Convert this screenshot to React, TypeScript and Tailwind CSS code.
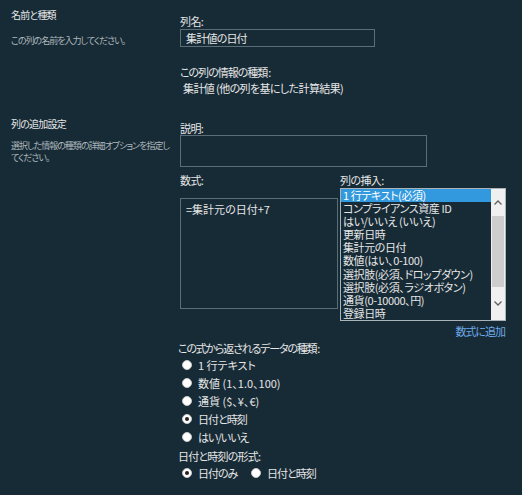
const font = "font-['Noto_Sans_CJK_JP','Noto_Sans',sans-serif] [font-feature-settings:'palt']";

const insertItems = [
  '1 行テキスト(必須)',
  'コンプライアンス資産 ID',
  'はい/いいえ (いいえ)',
  '更新日時',
  '集計元の日付',
  '数値(はい、0-100)',
  '選択肢(必須、ドロップダウン)',
  '選択肢(必須、ラジオボタン)',
  '通貨(0-10000、円)',
  '登録日時',
];

// labels made of kana/kanji only are drawn narrower, like the original UI font
const returnTypes = [
  { label: '1 行テキスト', checked: false, tight: false },
  { label: '数値 (1、1.0、100)', checked: false, tight: false },
  { label: '通貨 ($、¥、€)', checked: false, tight: false },
  { label: '日付と時刻', checked: true, tight: true },
  { label: 'はい/いいえ', checked: false, tight: true },
];

function Radio({ checked }: { checked: boolean }) {
  return (
    <span className="w-[10px] h-[10px] rounded-full bg-white border border-[#c8c8c8] flex items-center justify-center shrink-0">
      {checked && <span className="w-[4px] h-[4px] rounded-full bg-[#222]" />}
    </span>
  );
}

export default function App() {
  return (
    <div className={`w-[522px] h-[495px] bg-[#172b36] text-[#e6e6e6] text-[11px] leading-[14px] ${font}`}>
      {/* Name and type */}
      <div className="flex">
        <div className="w-[180px] pl-[11px] pt-[8px]">
          <div className="text-[10px] tracking-[-0.8px]">名前と種類</div>
          <div className="mt-[12px] text-[9px] leading-[13px] tracking-[-1px] text-[#aeb7bc]">この列の名前を入力してください。</div>
        </div>
        <div className="pt-[14px]">
          <div className="tracking-[-0.6px]">列名:</div>
          <div className="mt-[1px] w-[195px] h-[18px] border border-[#5b6d77] pl-[5px] leading-[16px] tracking-[-0.8px]">集計値の日付</div>
          <div className="mt-[18px] tracking-[-1px]">この列の情報の種類<span className="ml-[1px]">:</span></div>
          <div className="mt-[2px] pl-[3px] tracking-[-0.6px]">集計値 (他の列を基にした計算結果)</div>
        </div>
      </div>

      {/* Additional settings */}
      <div className="flex mt-[22px]">
        <div className="w-[180px] pl-[11px]">
          <div className="text-[10px] tracking-[-0.8px]">列の追加設定</div>
          <div className="mt-[9px] w-[165px] text-[9px] leading-[12px] tracking-[-1px] text-[#aeb7bc]">
            選択した情報の種類の詳細オプションを指定し
            <br />
            てください。
          </div>
        </div>
        <div className="pt-[4px]">
          <div className="tracking-[-0.6px]">説明:</div>
          <div className="w-[247px] h-[32px] border border-[#5b6d77]" />

          <div className="flex gap-[2px] mt-[6px]">
            <div className="w-[158px]">
              <div className="tracking-[-0.6px]">数式:</div>
              <div className="mt-[11px] h-[111px] border border-[#5b6d77] px-[5px] pt-[3px]">=集計元の日付+7</div>
            </div>
            <div className="w-[166px]">
              <div className="tracking-[-0.6px]">列の挿入:</div>
              <div className="mt-[1px] h-[133px] border border-[#a9b3b8] flex">
                <div className="flex-1 overflow-hidden">
                  {insertItems.map((item, i) => (
                    <div
                      key={item}
                      className={`h-[13.1px] leading-[13px] px-[2px] whitespace-nowrap tracking-[-0.4px] ${i === 0 ? 'bg-[#3399de] text-white' : ''}`}
                    >
                      {item}
                    </div>
                  ))}
                </div>
                <div className="w-[14px] bg-[#f0f0f0] flex flex-col">
                  <div className="h-[27px] flex items-center justify-center">
                    <svg width="8" height="5" viewBox="0 0 8 5" fill="none" stroke="#606060" strokeWidth="1.3">
                      <path d="M0.5 4.5L4 1L7.5 4.5" />
                    </svg>
                  </div>
                  <div className="h-[71px] mx-[1px] bg-[#cdcdcd]" />
                  <div className="flex-1 flex items-center justify-center">
                    <svg width="8" height="5" viewBox="0 0 8 5" fill="none" stroke="#606060" strokeWidth="1.3">
                      <path d="M0.5 0.5L4 4L7.5 0.5" />
                    </svg>
                  </div>
                </div>
              </div>
              <div className="mt-[3px] text-right pr-[1px] text-[#6ea9e6] tracking-[-1px]">数式に追加</div>
            </div>
          </div>

          <div className="mt-[3px] -ml-[2px] tracking-[-1.2px]">この式から返されるデータの種類<span className="ml-[1px]">:</span></div>
          <div className="mt-[1px]">
            {returnTypes.map(t => (
              <div key={t.label} className="h-[18px] flex items-center gap-[6px] pl-[2px]">
                <Radio checked={t.checked} />
                <span className={t.tight ? 'tracking-[-1px]' : ''}>{t.label}</span>
              </div>
            ))}
          </div>
          <div className="mt-[3px] -ml-[2px] tracking-[-0.8px]">日付と時刻の形式:</div>
          <div className="mt-[3px] h-[14px] flex items-center pl-[2px]">
            <div className="flex items-center gap-[6px] w-[69px]">
              <Radio checked />
              <span className="tracking-[-1px]">日付のみ</span>
            </div>
            <div className="flex items-center gap-[6px]">
              <Radio checked={false} />
              <span className="tracking-[-1px]">日付と時刻</span>
            </div>
          </div>
        </div>
      </div>
    </div>
  );
}
